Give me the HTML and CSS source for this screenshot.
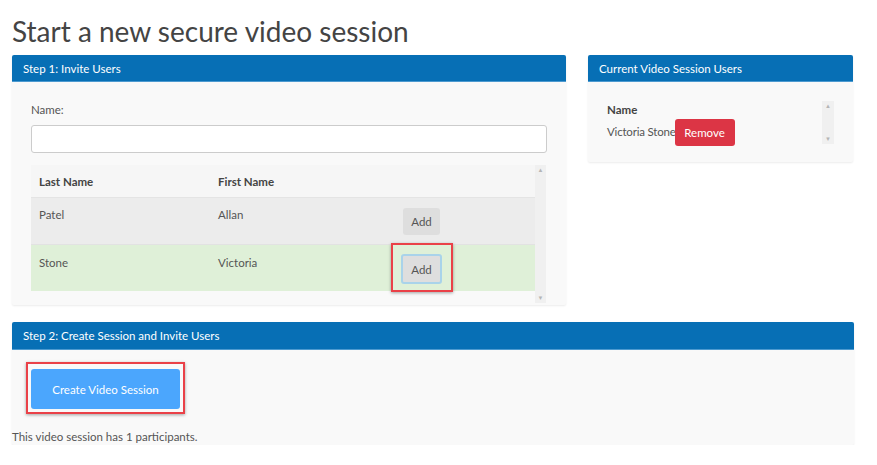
FILE: index.html
```html
<!DOCTYPE html>
<html>
<head>
<meta charset="utf-8">
<link rel="stylesheet" href="styles.css">
</head>
<body>
<div class="page">
  <h1 class="title">Start a new secure video session</h1>
  <div class="top-row">
    <section class="panel step1">
      <div class="panel-head">Step 1: Invite Users</div>
      <div class="panel-body step1-body">
        <label class="field-label">Name:</label>
        <input class="name-input" type="text">
        <div class="table-wrap">
          <div class="table">
            <div class="row head-row">
              <div class="c1">Last Name</div>
              <div class="c2">First Name</div>
              <div class="c3"></div>
            </div>
            <div class="row row-gray">
              <div class="c1">Patel</div>
              <div class="c2">Allan</div>
              <div class="c3"><button class="btn-add">Add</button></div>
            </div>
            <div class="row row-green">
              <div class="c1">Stone</div>
              <div class="c2">Victoria</div>
              <div class="c3"><button class="btn-add focused highlight-add">Add</button></div>
            </div>
          </div>
          <div class="scrollbar tall"><span class="arr">&#9650;</span><span class="arr">&#9660;</span></div>
        </div>
      </div>
    </section>
    <section class="panel current">
      <div class="panel-head">Current Video Session Users</div>
      <div class="panel-body current-body">
        <div class="users">
          <div class="users-head">Name</div>
          <div class="user-row"><span class="user-name">Victoria Stone</span><button class="btn-remove">Remove</button></div>
        </div>
        <div class="scrollbar short"><span class="arr">&#9650;</span><span class="arr">&#9660;</span></div>
      </div>
    </section>
  </div>
  <section class="panel step2">
    <div class="panel-head">Step 2: Create Session and Invite Users</div>
    <div class="panel-body step2-body">
      <div class="create-wrap"><button class="btn-create highlight-create">Create Video Session</button></div>
      <p class="note">This video session has 1 participants.</p>
    </div>
  </section>
</div>
</body>
</html>
```

FILE: styles.css
```css
* { box-sizing: border-box; }
html, body { margin: 0; padding: 0; background: #fff; }
body {
  font-family: "Lato", "Open Sans", "Liberation Sans", sans-serif;
  font-size: 11.5px;
  color: #555;
}
.page {
  padding: 0 23px 0 12px;
  width: 877px;
}
.title {
  margin: 0;
  padding-top: 14px;
  height: 55px;
  font-size: 28px;
  font-weight: 400;
  color: #444;
  line-height: 34px;
}
.top-row {
  display: flex;
  gap: 22px;
  align-items: flex-start;
}
.panel {
  background: #f9f9f9;
  box-shadow: 0 1px 2px rgba(0,0,0,0.08);
  border-radius: 2px;
}
.panel-head {
  background: #076fb5;
  color: #fff;
  height: 27px;
  line-height: 27px;
  padding-left: 11px;
  font-size: 11.5px;
  border-bottom: 1px solid #4d9ad0;
  border-radius: 2px 2px 0 0;
}
.step1 { width: 554px; height: 250px; }
.current { width: 265px; height: 107px; }
.step1-body { padding: 20px 19px 0 19px; }
.field-label { display: block; height: 23px; line-height: 16px; }
.name-input {
  display: block;
  width: 516px;
  height: 28px;
  border: 1px solid #ccc;
  border-radius: 3px;
  background: #fff;
  margin: 0 0 12px 0;
}
.table-wrap { display: flex; width: 516px; }
.table { width: 504px; }
.row { display: flex; }
.c1 { width: 179px; padding-left: 8px; }
.c2 { width: 185px; padding-left: 8px; }
.c3 { flex: 1; padding-left: 8px; }
.head-row {
  height: 33px;
  align-items: center;
  font-weight: 700;
  color: #444;
  background: #f6f6f6;
  border-bottom: 1px solid #e4e4e4;
}
.row-gray { height: 47px; background: #ececec; padding-top: 10px; border-bottom: 1px solid #e2e2e2; }
.row-green { height: 46px; background: #dff0d8; padding-top: 11px; }
.btn-add {
  font-family: inherit;
  font-size: 11.5px;
  color: #555;
  background: #dedede;
  border: none;
  border-radius: 3px;
  width: 37px;
  height: 27px;
  padding: 0;
  margin-top: 0;
}
.row-green .c3, .row-gray .c3 { padding-left: 0; }
.row-gray .btn-add { margin-left: 8px; }
.btn-add.focused {
  width: 41px;
  height: 30px;
  border: 2px solid #a9d3ea;
  margin-left: 6px;
  margin-top: -2px;
}
.highlight-add, .highlight-create { position: relative; }
.highlight-add::after {
  content: "";
  position: absolute;
  left: -12px; right: -13px; top: -13px; bottom: -10px;
  border: 2px solid #ea4148;
  box-shadow: 0 1px 3px rgba(0,0,0,0.35);
}
.scrollbar {
  width: 11px;
  background: #f0f0f0;
  display: flex;
  flex-direction: column;
  justify-content: space-between;
  align-items: center;
  color: #b5b5b5;
  font-size: 6px;
  line-height: 10px;
}
.scrollbar.tall { height: 138px; }
.current-body { display: flex; padding: 19px 19px 0 19px; }
.users { flex: 1; }
.users-head { font-weight: 700; color: #444; height: 15px; line-height: 15px; margin-top: 1px; }
.user-row { display: flex; align-items: center; }
.user-name { line-height: 20px; margin-top: 1px; letter-spacing: -0.2px; }
.btn-remove {
  font-family: inherit;
  font-size: 11.5px;
  background: #dc3545;
  color: #fff;
  border: none;
  border-radius: 3px;
  width: 60px;
  height: 27px;
  padding: 0;
  margin-top: 2px;
  margin-left: -1px;
}
.scrollbar.short { height: 43px; width: 12px; margin-right: 0; }
.step2 { margin-top: 17px; width: 842px; }
.step2 .panel-head { height: 28px; line-height: 28px; }
.step2-body { padding: 19px 0 0 0; height: 95px; }
.create-wrap { padding-left: 19px; }
.btn-create {
  font-family: inherit;
  font-size: 11.5px;
  color: #fff;
  background: #4ba6fd;
  border: none;
  border-radius: 3px;
  width: 149px;
  height: 40px;
  padding: 0;
}
.highlight-create::after {
  content: "";
  position: absolute;
  left: -5px; right: -5px; top: -7px; bottom: -5px;
  border: 2px solid #ea4148;
  box-shadow: 0 1px 3px rgba(0,0,0,0.35);
}
.note { margin: 20px 0 0 0; line-height: 16px; }
```
